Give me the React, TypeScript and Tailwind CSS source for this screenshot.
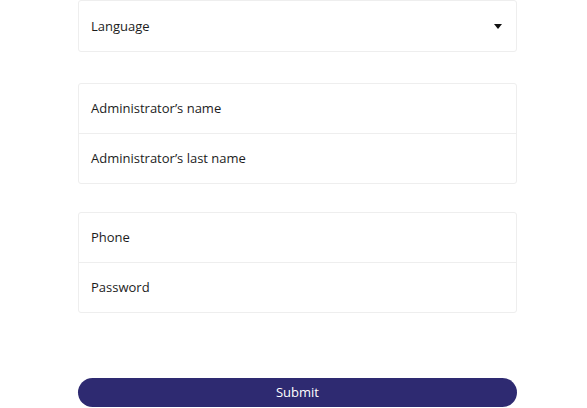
import React from "react";

export default function App() {
  const font = { fontFamily: '"Open Sans", "Noto Sans", sans-serif' };
  return (
    <div className="w-[587px] h-[408px] bg-white overflow-hidden" style={font}>
      <div className="ml-[78px] w-[439px] flex flex-col">
        <div className="h-[52px] border border-[#eeeeee] rounded-[3px] flex items-center justify-between pl-[12px] pr-[13px] pt-[1px]">
          <span className="text-[13px] text-[#1c1c1c]">Language</span>
          <svg width="8" height="5" viewBox="0 0 8 5" className="mr-[1px]">
            <path d="M0 0 H8 L4 5 Z" fill="#111111" />
          </svg>
        </div>
        <div className="mt-[31px] border border-[#eeeeee] rounded-[3px] flex flex-col">
          <div className="h-[50px] flex items-center pl-[12px] pt-[1px] border-b border-[#eeeeee] text-[13px] text-[#1c1c1c]">
            Administrator’s name
          </div>
          <div className="h-[49px] flex items-center pl-[12px] pt-[1px] text-[13px] text-[#1c1c1c]">
            Administrator’s last name
          </div>
        </div>
        <div className="mt-[28px] border border-[#eeeeee] rounded-[3px] flex flex-col">
          <div className="h-[50px] flex items-center pl-[12px] pt-[1px] border-b border-[#eeeeee] text-[13px] text-[#1c1c1c]">
            Phone
          </div>
          <div className="h-[49px] flex items-center pl-[12px] pt-[1px] text-[13px] text-[#1c1c1c]">
            Password
          </div>
        </div>
        <button className="mt-[65px] h-[29px] rounded-full bg-[#2e2a71] text-white text-[13px] flex items-center justify-center pt-[1px]">
          Submit
        </button>
      </div>
    </div>
  );
}
